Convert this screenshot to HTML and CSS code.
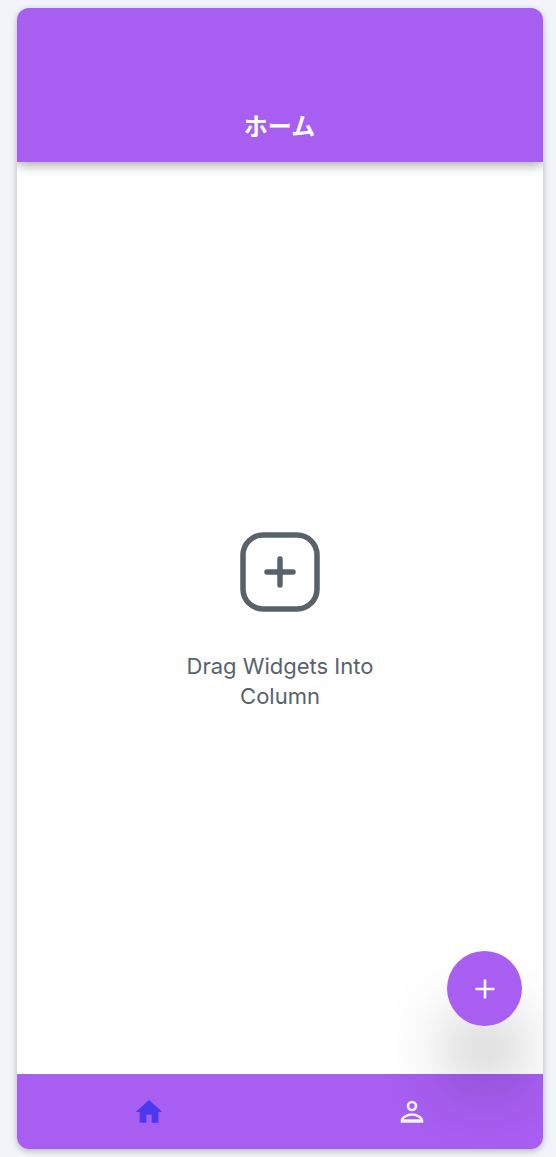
FILE: index.html
```html
<!DOCTYPE html>
<html lang="ja">
<head>
  <meta charset="UTF-8">
  <meta name="viewport" content="width=device-width, initial-scale=1.0">
  <title>ホーム</title>
  <link rel="stylesheet" href="styles.css">
</head>
<body>
  <div class="phone">
    <header class="app-bar">
      <h1>ホーム</h1>
    </header>
    <main class="content">
      <svg class="empty-icon" width="80" height="80" viewBox="0 0 80 80" fill="none" stroke="#57636c" stroke-linecap="round">
        <rect x="3" y="3" width="74" height="74" rx="20" stroke-width="5.5"></rect>
        <path d="M40 27V53M27 40H53" stroke-width="5.5"></path>
      </svg>
      <p class="empty-text">Drag Widgets Into Column</p>
    </main>
    <nav class="nav-bar">
      <div class="nav-item">
        <svg width="32" height="32" viewBox="0 0 24 24" fill="#4b39ef">
          <path d="M10 20v-6h4v6h5v-8h3L12 3 2 12h3v8z"></path>
        </svg>
      </div>
      <div class="nav-item">
        <svg width="32" height="32" viewBox="0 0 24 24" fill="#f1f4f8" fill-rule="evenodd">
          <path d="M12 3.500a4 4 0 1 1 0 8 4 4 0 0 1 0-8zm0 2a2 2 0 1 0 0 4 2 2 0 0 0 0-4z"></path>
          <path d="M3.500 20v-1.500c0-3 5-5.500 8.500-5.500s8.500 2.500 8.500 5.500V20zM5.800 17.500h12.400c-.8-1.200-3.600-2.600-6.200-2.600s-5.400 1.400-6.200 2.600z"></path>
        </svg>
      </div>
    </nav>
    <button class="fab">
      <svg width="24" height="24" viewBox="0 0 24 24" fill="none" stroke="#ffffff" stroke-width="2.6">
        <path d="M12 2.500V21.500M2.500 12H21.500"></path>
      </svg>
    </button>
  </div>
</body>
</html>
```

FILE: styles.css
```css
html, body {
  height: 100%;
}

body {
  margin: 0;
  padding: 8px 13px 8px 17px;
  box-sizing: border-box;
  background-color: #f1f4f8;
  font-family: 'Inter', 'Noto Sans CJK JP', sans-serif;
}

.phone {
  position: relative;
  display: flex;
  flex-direction: column;
  height: 100%;
  background-color: #fff;
  border-radius: 12px;
  overflow: hidden;
  box-shadow: 0 2px 6px rgba(0, 0, 0, 0.25);
}

.app-bar {
  position: relative;
  z-index: 1;
  display: flex;
  flex: 0 0 154px;
  box-sizing: border-box;
  align-items: flex-end;
  justify-content: center;
  padding-bottom: 21px;
  background-color: #a75ef1;
  box-shadow: 0 2px 12px rgba(0, 0, 0, 0.4);
}

.app-bar h1 {
  margin: 0 0 0 -1px;
  color: #fff;
  font-size: 24px;
  font-weight: 700;
  line-height: 32px;
  font-family: 'Noto Sans CJK JP', sans-serif;
}

.content {
  flex: 1;
  display: flex;
  flex-direction: column;
  align-items: center;
  justify-content: center;
  padding-top: 7px;
}

.empty-icon {
  display: block;
}

.empty-text {
  width: 200px;
  margin: 39px 0 0;
  color: #57636c;
  font-size: 22px;
  line-height: 30px;
  text-align: center;
}

.nav-bar {
  display: flex;
  flex: 0 0 75px;
  background-color: #a75ef1;
  box-shadow: 0 -1px 1px rgba(255, 255, 255, 0.1);
}

.nav-item {
  flex: 1;
  display: flex;
  align-items: center;
  justify-content: center;
}

.nav-item svg {
  display: block;
}

.fab {
  position: absolute;
  right: 21px;
  bottom: 123px;
  display: flex;
  align-items: center;
  justify-content: center;
  width: 75px;
  height: 75px;
  padding: 0;
  border: none;
  border-radius: 50%;
  background-color: #a75ef1;
  box-shadow: 0 60px 70px -10px rgba(0, 0, 0, 0.42);
}
```
